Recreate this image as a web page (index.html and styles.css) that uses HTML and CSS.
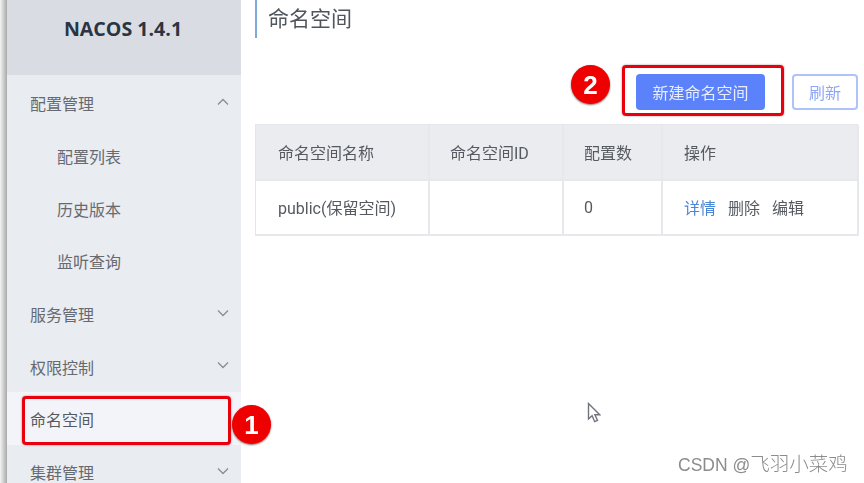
FILE: index.html
```html
<!DOCTYPE html>
<html lang="zh-CN">
<head>
<meta charset="utf-8">
<title>命名空间</title>
<link rel="stylesheet" href="styles.css">
</head>
<body>
<div class="page">
  <div class="edge"></div>
  <aside class="sidebar">
    <div class="brand">NACOS 1.4.1</div>
    <nav class="menu">
      <div class="item"><span class="label">配置管理</span><svg class="chev" viewBox="0 0 12 8"><path d="M1 6.5 6 1.5l5 5"/></svg></div>
      <div class="item sub"><span class="label">配置列表</span></div>
      <div class="item sub"><span class="label">历史版本</span></div>
      <div class="item sub"><span class="label">监听查询</span></div>
      <div class="item"><span class="label">服务管理</span><svg class="chev" viewBox="0 0 12 8"><path d="M1 1.5 6 6.5l5-5"/></svg></div>
      <div class="item"><span class="label">权限控制</span><svg class="chev" viewBox="0 0 12 8"><path d="M1 1.5 6 6.5l5-5"/></svg></div>
      <div class="item active"><span class="label">命名空间</span></div>
      <div class="item"><span class="label">集群管理</span><svg class="chev" viewBox="0 0 12 8"><path d="M1 1.5 6 6.5l5-5"/></svg></div>
    </nav>
  </aside>
  <main class="main">
    <h1 class="title">命名空间</h1>
    <div class="toolbar">
      <button class="btn primary">新建命名空间</button>
      <button class="btn ghost">刷新</button>
    </div>
    <div class="table">
      <div class="cell head c1">命名空间名称</div>
      <div class="cell head c2">命名空间ID</div>
      <div class="cell head c3">配置数</div>
      <div class="cell head c4">操作</div>
      <div class="cell body c1">public(保留空间)</div>
      <div class="cell body c2"></div>
      <div class="cell body c3">0</div>
      <div class="cell body c4 actions"><a class="link">详情</a><a>删除</a><a>编辑</a></div>
    </div>
  </main>
  <div class="mark mark-one"></div>
  <div class="mark mark-two"></div>
  <div class="badge badge-one">1</div>
  <div class="badge badge-two">2</div>
  <svg class="cursor" viewBox="0 0 14 22"><path d="M1.5 1.5v15.5l3.6-3.3 2.6 6 2.8-1.2-2.6-5.8h4.8z"/></svg>
  <div class="watermark">CSDN @<span class="watermark-name">飞羽小菜鸡</span></div>
</div>
</body>
</html>
```
FILE: styles.css
```css
* { box-sizing: border-box; }
html, body { margin: 0; height: 100%; background: #fff; }
.page {
  position: relative;
  display: flex;
  width: 864px;
  height: 483px;
  overflow: hidden;
  font-family: Roboto, "Noto Sans CJK SC", sans-serif;
  filter: blur(0.5px);
}
.edge {
  flex: 0 0 7px;
  background: linear-gradient(90deg, #f4f4f4 0, #d5d5d5 40%, #a9a9a9 100%);
}
.sidebar { flex: 0 0 234px; background: #e9ecf1; }
.brand {
  height: 75px;
  padding-top: 15px;
  padding-right: 2px;
  background: #d9dde3;
  color: #2a3442;
  font: 700 19.6px/27px "Open Sans", sans-serif;
  text-align: center;
}
.menu { padding-top: 1px; }
.item {
  display: flex;
  align-items: center;
  justify-content: space-between;
  height: 52.7px;
  padding: 0 12px 0 23px;
  color: #666a70;
  font-size: 16px;
  line-height: 20px;
}
.label { padding-top: 6px; }
.item.sub { padding-left: 50px; }
.item.active { background: #f2f4f9; color: #555a60; }
.chev { width: 12px; height: 8px; margin-top: -1px; }
.chev path { fill: none; stroke: #8a8d92; stroke-width: 1.3; }
.main { flex: 1; padding-left: 14px; padding-right: 6px; }
.title {
  margin: 0;
  height: 38px;
  padding-left: 11px;
  border-left: 2px solid #7fa9d8;
  color: #50555c;
  font-size: 21px;
  font-weight: 400;
  line-height: 38px;
}
.toolbar {
  display: flex;
  justify-content: flex-end;
  gap: 27px;
  margin-top: 36px;
}
.btn {
  height: 36px;
  border-radius: 4px;
  font-family: inherit;
  font-size: 16px;
  padding: 0;
}
.primary { width: 129px; background: #5b82fb; border: 0; color: #e8edff; }
.ghost { width: 66px; background: #fff; border: 2px solid #afc3fb; color: #8fa8f5; }
.table {
  display: grid;
  grid-template-columns: 174px 134px 99px 196px;
  grid-template-rows: 56px 55px;
  margin-top: 14px;
  width: 603px;
  border: 1px solid #e4e6ea;
  border-width: 1px 0 0 1px;
  color: #555a60;
  font-size: 16px;
}
.cell {
  display: flex;
  align-items: center;
  gap: 12px;
  padding-left: 22px;
  border-right: 2px solid #e6e8ec;
  border-bottom: 2px solid #e6e8ec;
}
.head { background: #ebecf0; }
.body { padding-bottom: 1px; }
.c2 { padding-left: 20px; }
.c3 { padding-left: 20px; }
.c4 { padding-left: 21px; }
.link { color: #4a86d6; }
.mark {
  position: absolute;
  border: 3px solid #e8000c;
  border-radius: 4px;
  box-shadow: 0 0 2px rgba(90, 0, 0, .5);
}
.mark-one { left: 22px; top: 396px; width: 209px; height: 49px; }
.mark-two { left: 622px; top: 65px; width: 162px; height: 51px; }
.badge {
  position: absolute;
  display: flex;
  align-items: center;
  justify-content: center;
  width: 39px;
  height: 39px;
  border-radius: 50%;
  background: #ee0000;
  box-shadow: 0 1px 2px rgba(60, 0, 0, .6);
  color: #fff;
  font: 700 26px/1 "Liberation Sans", sans-serif;
}
.badge-one { left: 232px; top: 405px; }
.badge-two { left: 571px; top: 65px; }
.cursor { position: absolute; left: 587px; top: 402px; width: 14px; height: 22px; }
.cursor path { fill: #fff; stroke: #70747c; stroke-width: 1.4; }
.watermark {
  position: absolute;
  left: 678px;
  top: 452px;
  color: #8c8c8c;
  font-family: "Liberation Sans", "Noto Sans CJK SC", sans-serif;
  font-size: 17.5px;
  line-height: 24px;
  white-space: nowrap;
}
.watermark-name { font-size: 19.5px; font-weight: 300; }
```
